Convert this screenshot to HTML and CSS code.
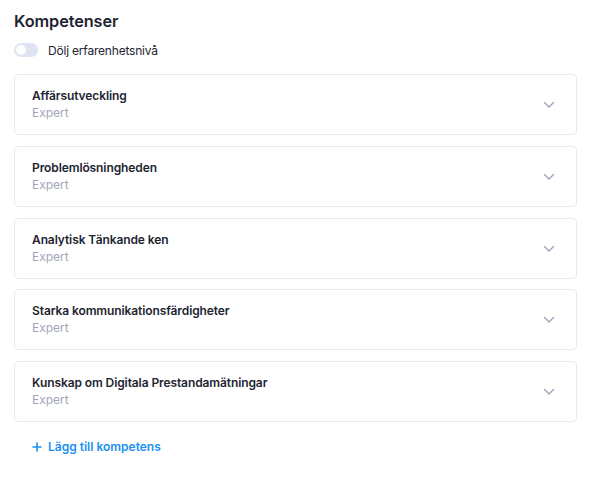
FILE: index.html
```html
<!DOCTYPE html>
<html lang="sv">
<head>
<meta charset="utf-8">
<link rel="stylesheet" href="styles.css">
</head>
<body>
<div class="page">
  <h1 class="title">Kompetenser</h1>
  <label class="toggle-row">
    <span class="toggle"><span class="knob"></span></span>
    <span class="toggle-label">Dölj erfarenhetsnivå</span>
  </label>
  <div class="list">
    <div class="card"><div class="text"><div class="name">Affärsutveckling</div><div class="level">Expert</div></div><svg class="chev" viewBox="0 0 12 8" width="12" height="8"><path d="M1.5 1.5 L6 6 L10.5 1.5" fill="none" stroke="#a3a8bd" stroke-width="1.5" stroke-linecap="round" stroke-linejoin="round"/></svg></div>
    <div class="card"><div class="text"><div class="name">Problemlösningheden</div><div class="level">Expert</div></div><svg class="chev" viewBox="0 0 12 8" width="12" height="8"><path d="M1.5 1.5 L6 6 L10.5 1.5" fill="none" stroke="#a3a8bd" stroke-width="1.5" stroke-linecap="round" stroke-linejoin="round"/></svg></div>
    <div class="card"><div class="text"><div class="name">Analytisk Tänkande ken</div><div class="level">Expert</div></div><svg class="chev" viewBox="0 0 12 8" width="12" height="8"><path d="M1.5 1.5 L6 6 L10.5 1.5" fill="none" stroke="#a3a8bd" stroke-width="1.5" stroke-linecap="round" stroke-linejoin="round"/></svg></div>
    <div class="card"><div class="text"><div class="name">Starka kommunikationsfärdigheter</div><div class="level">Expert</div></div><svg class="chev" viewBox="0 0 12 8" width="12" height="8"><path d="M1.5 1.5 L6 6 L10.5 1.5" fill="none" stroke="#a3a8bd" stroke-width="1.5" stroke-linecap="round" stroke-linejoin="round"/></svg></div>
    <div class="card"><div class="text"><div class="name">Kunskap om Digitala Prestandamätningar</div><div class="level">Expert</div></div><svg class="chev" viewBox="0 0 12 8" width="12" height="8"><path d="M1.5 1.5 L6 6 L10.5 1.5" fill="none" stroke="#a3a8bd" stroke-width="1.5" stroke-linecap="round" stroke-linejoin="round"/></svg></div>
  </div>
  <a class="add" href="#"><svg class="plus" viewBox="0 0 10 10" width="10" height="10"><path d="M5 1 V9 M1 5 H9" stroke="#1a91f0" stroke-width="1.6" stroke-linecap="round"/></svg><span>Lägg till kompetens</span></a>
</div>
</body>
</html>
```
FILE: styles.css
```css
* { box-sizing: border-box; }
html, body { margin: 0; padding: 0; background: #fff; }
body { font-family: Inter, "Noto Sans", sans-serif; color: #1e2532; }
.page { padding: 10px 17px 0 14px; display: flex; flex-direction: column; }
.title { margin: 0; font-size: 16.3px; font-weight: 600; line-height: 22px; letter-spacing: -0.1px; }
.toggle-row { display: flex; align-items: center; gap: 10px; margin-top: 10px; height: 16px; }
.toggle { width: 24px; height: 14px; border-radius: 7px; background: #dfe3f4; position: relative; display: block; }
.knob { position: absolute; left: 2px; top: 2px; width: 10px; height: 10px; border-radius: 50%; background: #fff; }
.toggle-label { font-size: 12px; color: #1e2532; letter-spacing: -0.2px; }
.list { display: flex; flex-direction: column; gap: 10.75px; margin-top: 16px; }
.card { height: 61px; border: 1px solid #e7eaf4; border-radius: 4px; display: flex; align-items: center; justify-content: space-between; padding: 0 21px 1px 17px; }
.text { display: flex; flex-direction: column; }
.name { font-size: 12px; font-weight: 600; line-height: 17px; color: #1e2532; letter-spacing: -0.1px; }
.level { font-size: 12px; line-height: 17px; color: #9fa6bb; }
.chev { display: block; margin-top: 2px; }
.add { display: flex; align-items: center; gap: 6px; margin: 17px 0 0 18px; color: #1a91f0; text-decoration: none; font-size: 12px; font-weight: 600; }
.plus { display: block; }
```
